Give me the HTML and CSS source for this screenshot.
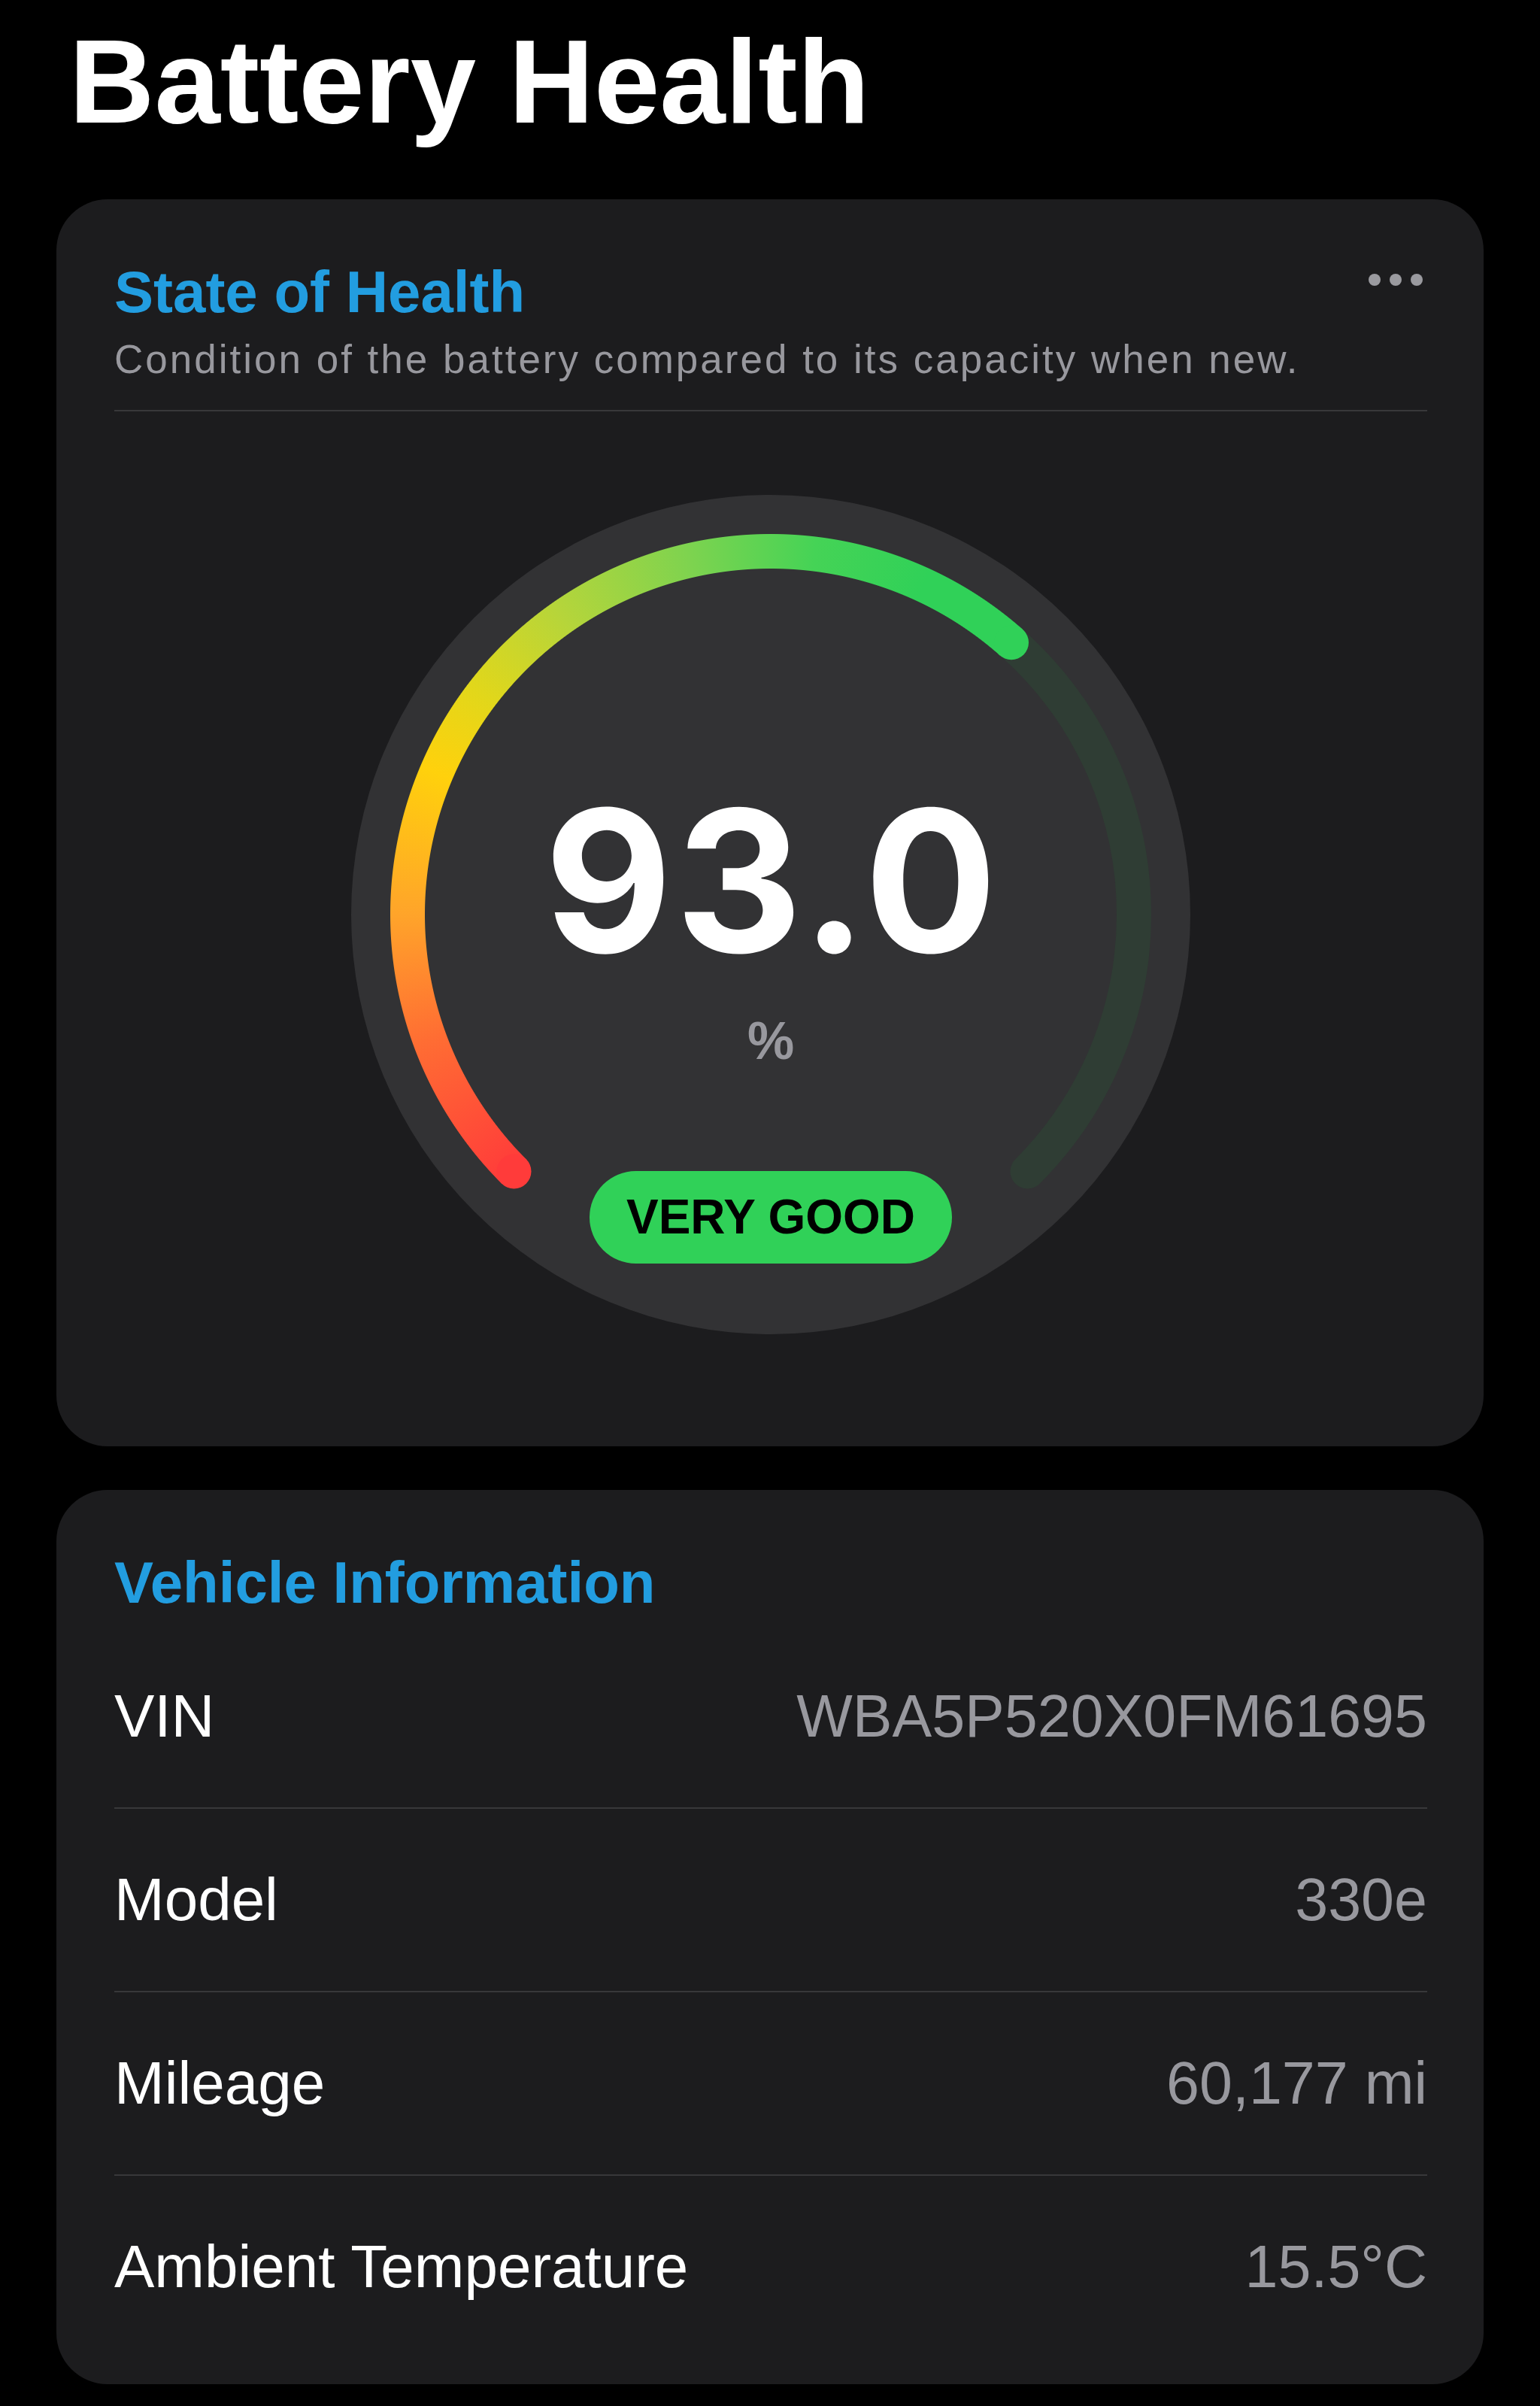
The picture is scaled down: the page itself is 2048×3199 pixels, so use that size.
FILE: index.html
```html
<!DOCTYPE html>
<html lang="en">
<head>
<meta charset="utf-8">
<title>Battery Health</title>
<link rel="stylesheet" href="styles.css">
</head>
<body>
<main class="page">
  <h1 class="page-title">Battery Health</h1>

  <section class="card card-health">
    <div class="card-header">
      <h2 class="card-title">State of Health</h2>
      <button class="more" type="button" aria-label="More options"><span class="dot"></span><span class="dot"></span><span class="dot"></span></button>
    </div>
    <p class="card-subtitle">Condition of the battery compared to its capacity when new.</p>
    <hr class="divider">
    <div class="gauge">
      <svg class="gauge-layer" viewBox="0 0 1116 1116" width="1116" height="1116" aria-hidden="true">
        <circle cx="558" cy="558" r="558" fill="#323234"/>
        <path d="M 216.5 899.5 A 483 483 0 1 1 899.5 899.5" fill="none" stroke="#2f3d34" stroke-width="46" stroke-linecap="round"/>
      </svg>
      <div class="gauge-progress"></div>
      <svg class="gauge-layer" viewBox="0 0 1116 1116" width="1116" height="1116" aria-hidden="true">
        <circle cx="216.5" cy="899.5" r="23" fill="#ff3b3a"/>
        <circle cx="878" cy="196.2" r="23" fill="#30d158"/>
      </svg>
      <div class="gauge-readout">
        <div class="gauge-value">93.0</div>
        <div class="gauge-unit">%</div>
        <div class="gauge-badge">VERY GOOD</div>
      </div>
    </div>
  </section>

  <section class="card card-info">
    <h2 class="card-title">Vehicle Information</h2>
    <dl class="info-list">
      <div class="info-row"><dt>VIN</dt><dd>WBA5P520X0FM61695</dd></div>
      <div class="info-row"><dt>Model</dt><dd>330e</dd></div>
      <div class="info-row"><dt>Mileage</dt><dd>60,177 mi</dd></div>
      <div class="info-row"><dt>Ambient Temperature</dt><dd>15.5°C</dd></div>
    </dl>
  </section>
</main>
</body>
</html>
```

FILE: styles.css
```css
* {
  box-sizing: border-box;
}

html,
body {
  margin: 0;
  padding: 0;
  background: #000;
}

body {
  font-family: "Liberation Sans", Arial, sans-serif;
  color: #fff;
}

.page {
  padding: 30px 75px 0;
  display: flex;
  flex-direction: column;
}

.page-title {
  margin: 0 0 78px 17px;
  font-size: 157px;
  line-height: 157px;
  font-weight: 700;
  color: #fff;
}

.card {
  background: #1c1c1e;
  border-radius: 68px;
}

.card-health {
  padding: 78px 75px 149px 77px;
  display: flex;
  flex-direction: column;
}

.card-info {
  margin-top: 58px;
  padding: 78px 75px 35px 77px;
}

.card-header {
  display: flex;
  justify-content: space-between;
  align-items: flex-start;
}

.card-title {
  margin: 0;
  font-size: 78px;
  line-height: 90px;
  font-weight: 700;
  color: #229de0;
}

.more {
  margin: 21px 6px 0 0;
  padding: 0;
  border: 0;
  background: none;
  display: flex;
  gap: 12px;
}

.dot {
  width: 16px;
  height: 16px;
  border-radius: 50%;
  background: #9a9a9f;
}

.card-subtitle {
  margin: 13px 0 0;
  font-size: 53px;
  line-height: 64px;
  letter-spacing: 3px;
  color: #98989e;
}

.divider {
  margin: 35px 0 0;
  border: 0;
  height: 2px;
  background: #38383a;
}

.gauge {
  position: relative;
  width: 1116px;
  height: 1116px;
  margin: 111px auto 0;
}

.gauge-layer {
  position: absolute;
  left: 0;
  top: 0;
  display: block;
}

.gauge-progress {
  position: absolute;
  inset: 0;
  border-radius: 50%;
  background: conic-gradient(from 225deg at 50% 50%,
    #ff3b3a 0deg,
    #ff6d33 25deg,
    #ffa42a 45deg,
    #ffd10c 68deg,
    #e2d71a 82deg,
    #b6d53a 100deg,
    #7ed34f 122deg,
    #45d356 142deg,
    #30d158 160deg,
    #30d158 176.5deg,
    transparent 176.5deg);
  -webkit-mask-image: radial-gradient(circle at 50% 50%, transparent 459.5px, #000 460.5px, #000 505.5px, transparent 506.5px);
  mask-image: radial-gradient(circle at 50% 50%, transparent 459.5px, #000 460.5px, #000 505.5px, transparent 506.5px);
}

.gauge-readout {
  position: absolute;
  inset: 0;
  display: flex;
  flex-direction: column;
  align-items: center;
  padding-top: 382px;
}

.gauge-value {
  font-family: Inter, "Liberation Sans", sans-serif;
  font-weight: 700;
  font-size: 262px;
  line-height: 262px;
  letter-spacing: 4px;
  padding-left: 4px;
  color: #fff;
}

.gauge-unit {
  margin-top: 42px;
  font-size: 70px;
  line-height: 80px;
  font-weight: 700;
  color: #98989e;
}

.gauge-badge {
  margin-top: 133px;
  height: 123px;
  padding: 0 49px;
  border-radius: 62px;
  background: #30d158;
  color: #000;
  font-size: 64px;
  line-height: 123px;
  font-weight: 700;
}

.info-list {
  margin: 12px 0 0;
  padding: 0;
}

.info-row {
  display: flex;
  justify-content: space-between;
  height: 242px;
  line-height: 242px;
  font-size: 80px;
}

.info-row + .info-row {
  height: 244px;
  border-top: 2px solid #38383a;
}

.info-row dt {
  color: #fff;
}

.info-row dd {
  margin: 0;
  font-size: 79px;
  color: #98989e;
}
```
